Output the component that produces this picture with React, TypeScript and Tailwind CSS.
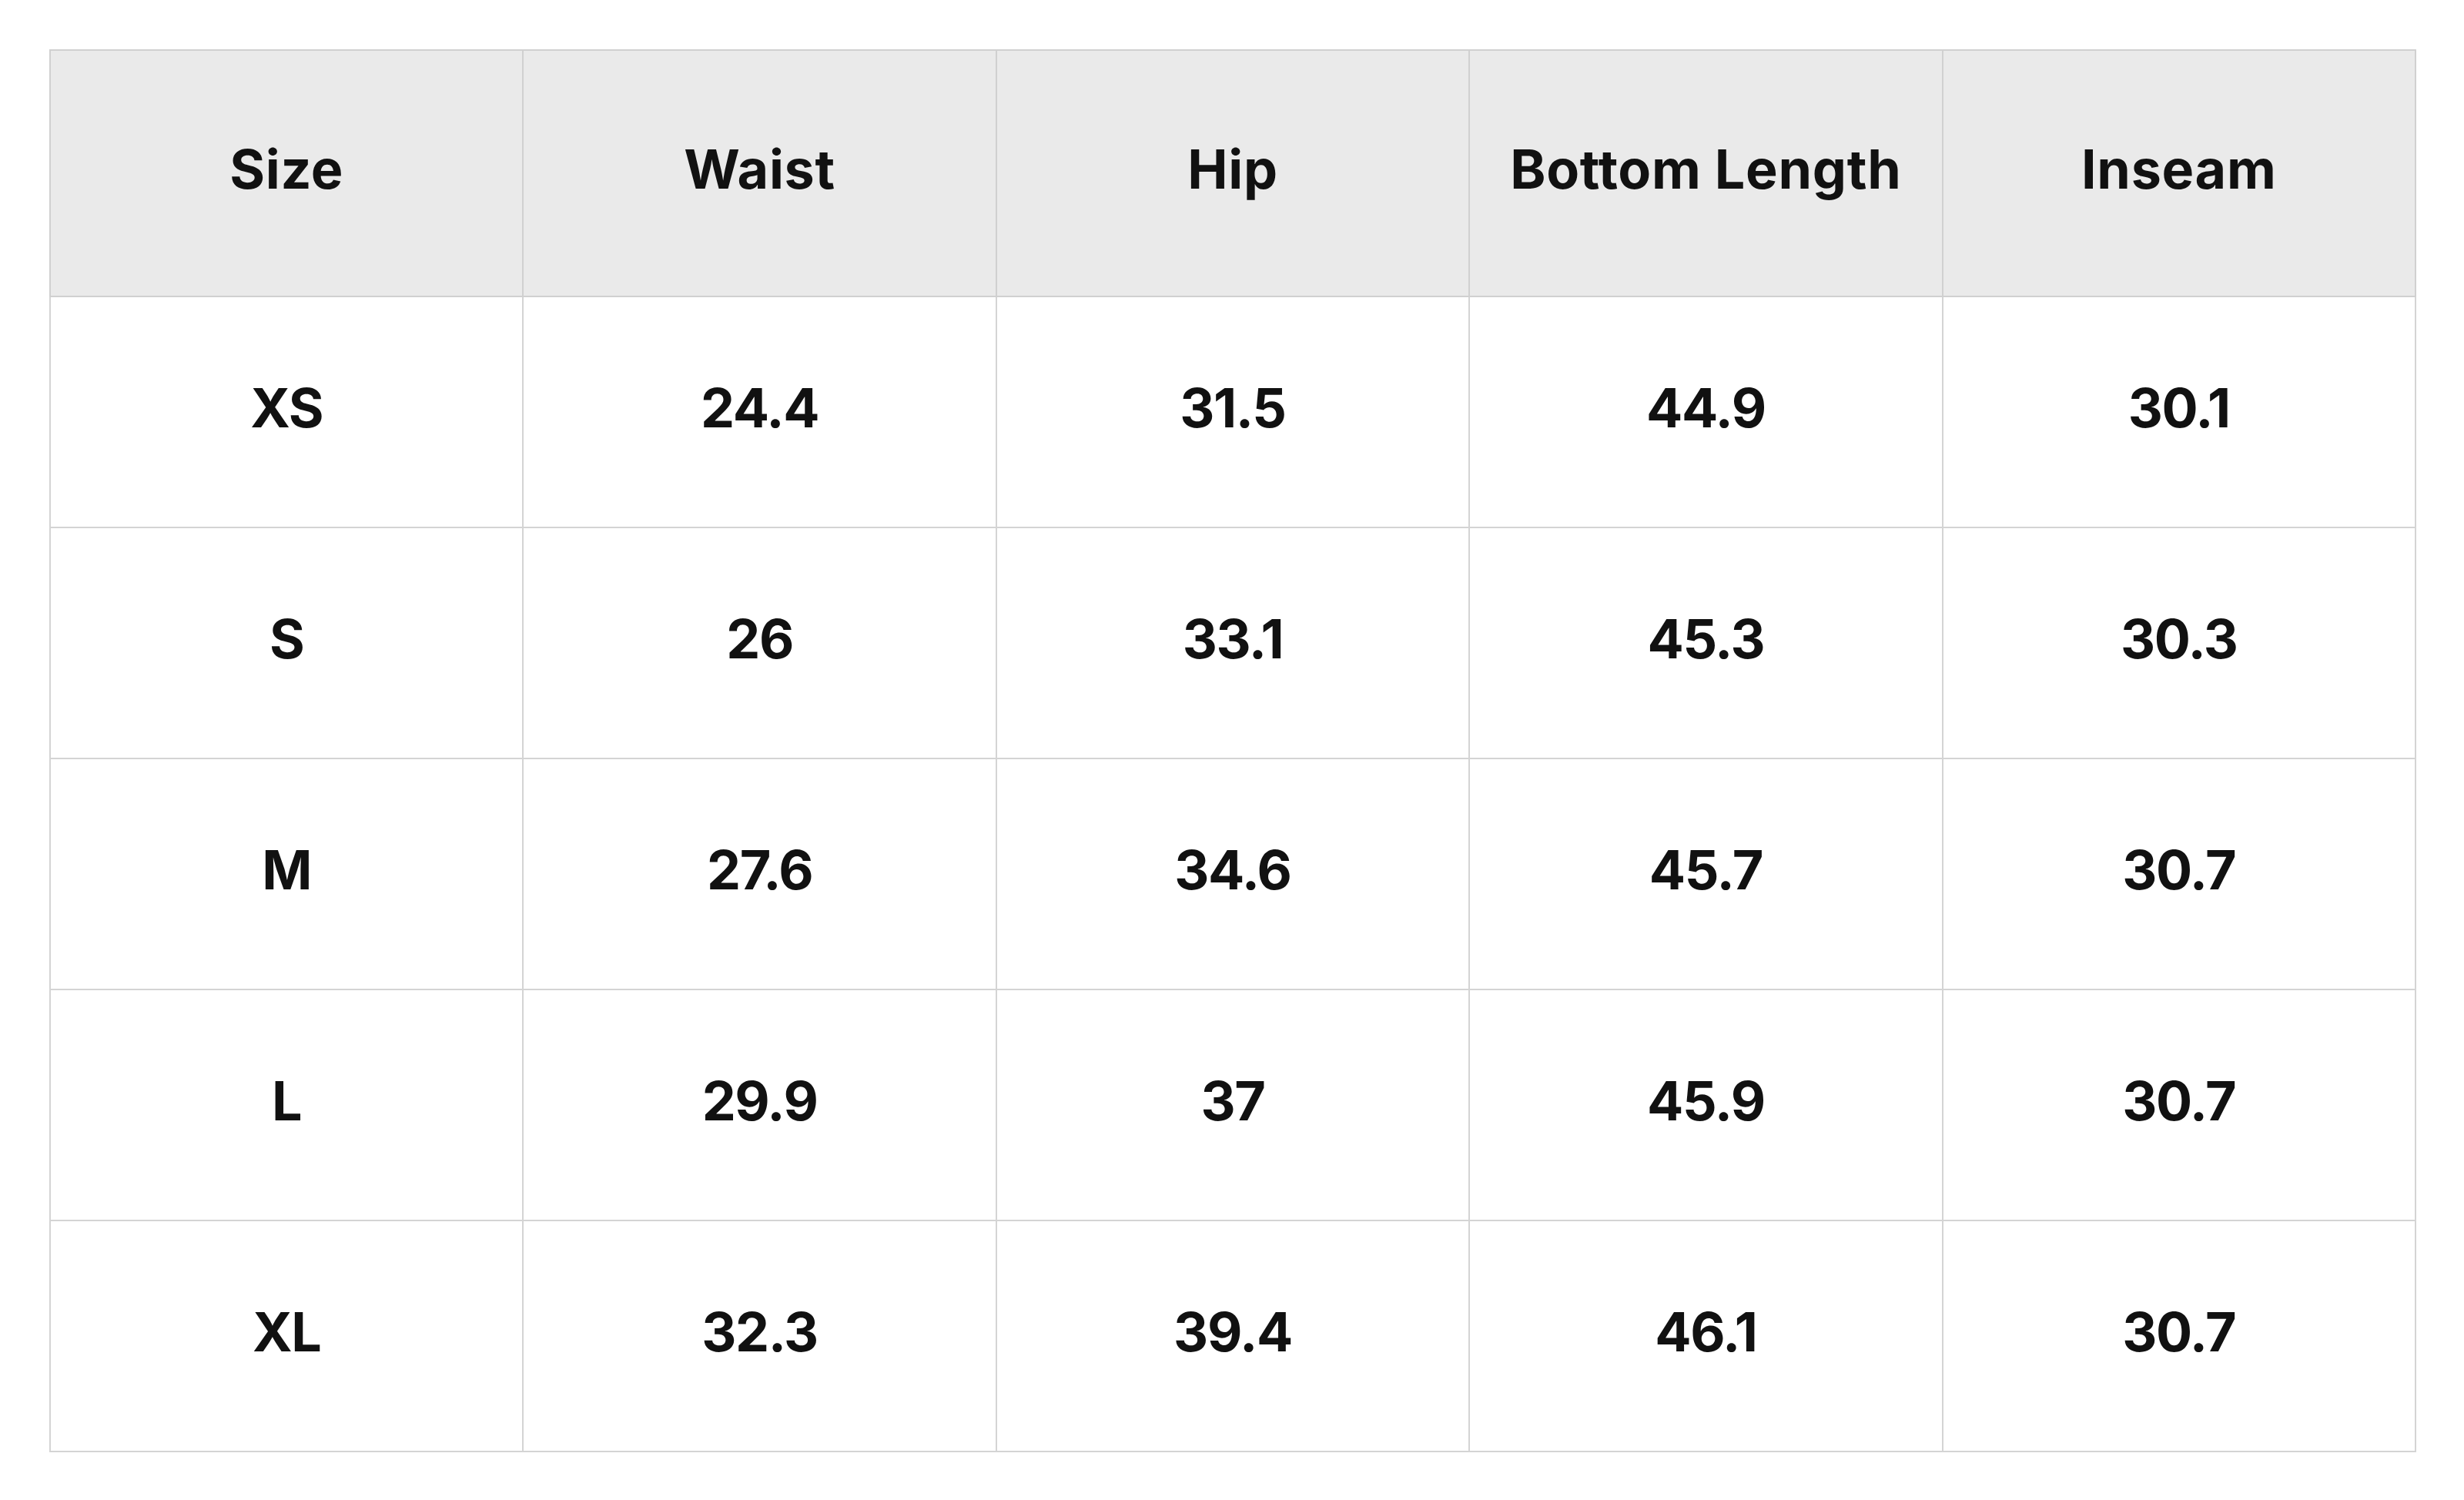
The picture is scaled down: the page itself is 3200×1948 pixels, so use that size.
const headers = ["Size", "Waist", "Hip", "Bottom Length", "Inseam"];

const rows = [
  ["XS", "24.4", "31.5", "44.9", "30.1"],
  ["S", "26", "33.1", "45.3", "30.3"],
  ["M", "27.6", "34.6", "45.7", "30.7"],
  ["L", "29.9", "37", "45.9", "30.7"],
  ["XL", "32.3", "39.4", "46.1", "30.7"],
];

export default function App() {
  return (
    <div className="min-h-screen bg-white p-16 font-['Inter',sans-serif] text-[#111111]">
      <table className="w-[3074px] table-fixed border-collapse">
        <thead>
          <tr className="bg-[#eaeaea]">
            {headers.map((h) => (
              <th
                key={h}
                className="h-[320px] border-2 border-[#d0d0d0] pb-3 text-center text-[70px] font-bold tracking-[0.01em]"
              >
                {h}
              </th>
            ))}
          </tr>
        </thead>
        <tbody>
          {rows.map((row) => (
            <tr key={row[0]}>
              {row.map((cell, i) => (
                <td
                  key={i}
                  className="h-[300px] border-2 border-[#d4d4d4] pb-3 text-center text-[70px] font-bold tracking-[-0.02em]"
                >
                  {cell}
                </td>
              ))}
            </tr>
          ))}
        </tbody>
      </table>
    </div>
  );
}
